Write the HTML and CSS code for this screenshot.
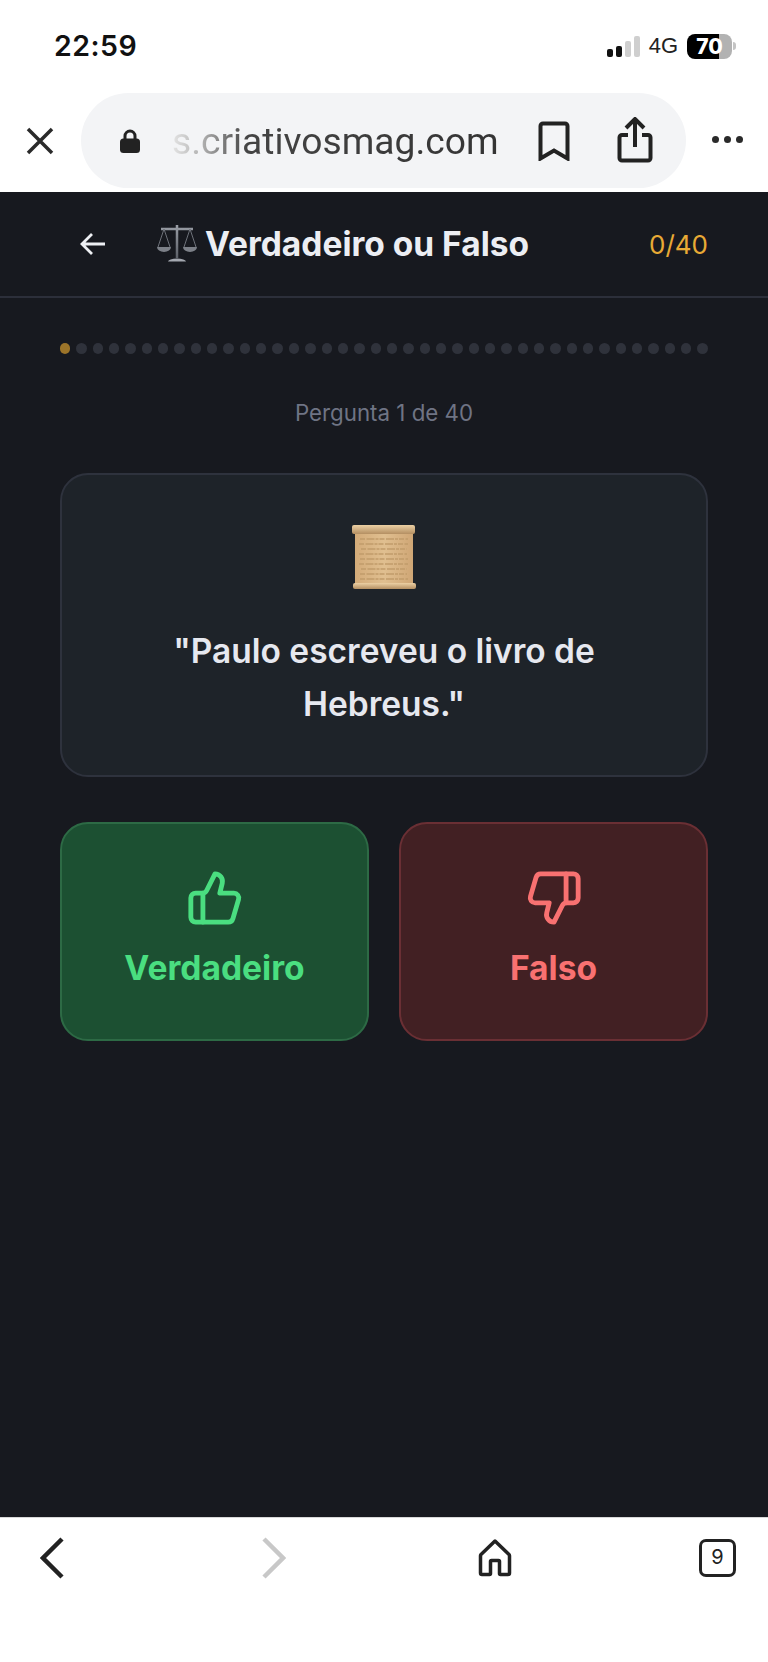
FILE: index.html
```html
<!DOCTYPE html>
<html lang="pt-BR">
<head>
  <meta charset="utf-8">
  <title>Verdadeiro ou Falso</title>
  <link rel="stylesheet" href="styles.css">
</head>

<body>
  <div class="status-bar">
    <span class="clock">22:59</span>
    <div class="status-right">
      <div class="signal">
        <i class="bar bar-1"></i><i class="bar bar-2"></i><i class="bar bar-3"></i><i class="bar bar-4"></i>
      </div>
      <span class="network">4G</span>
      <div class="battery">70</div>
      <i class="battery-nub"></i>
    </div>
  </div>

  <div class="browser-bar">
    <svg class="close-icon" viewBox="0 0 28 28"><path d="M2 2 26 26M26 2 2 26"/></svg>
    <div class="url-pill">
      <svg class="lock-icon" viewBox="0 0 20 24"><path class="lock-ring" d="M5 11V7a5 5 0 0 1 10 0v4"/><rect y="9.500" width="20" height="14.500" rx="3.500"/></svg>
      <span class="url-text">s.criativosmag.com</span>
      <svg class="bookmark-icon" viewBox="0 0 32 40"><path d="M2.500 37.500V5a2.500 2.500 0 0 1 2.500-2.500h22a2.500 2.500 0 0 1 2.500 2.500v32.500L16 29.500Z"/></svg>
      <svg class="share-icon" viewBox="0 0 36 46"><path d="M18 30V4M9 11l9-9 9 9"/><path d="M11 18H5a2.500 2.500 0 0 0-2.500 2.500V41A2.500 2.500 0 0 0 5 43.500h26a2.500 2.500 0 0 0 2.500-2.500V20.500A2.500 2.500 0 0 0 31 18h-6"/></svg>
    </div>
    <div class="more-dots"><i></i><i></i><i></i></div>
  </div>

  <main class="quiz">
    <header class="quiz-header">
      <svg class="back-arrow" viewBox="0 0 26 24"><path d="M25 12H2M12 2 2 12l10 10"/></svg>
      <h1 class="quiz-title">
        <svg class="scales-icon" viewBox="0 0 40 40">
          <defs>
            <linearGradient id="steel" x1="0" y1="0" x2="0" y2="1">
              <stop offset="0" stop-color="#9a9ea6"/>
              <stop offset="1" stop-color="#5c6068"/>
            </linearGradient>
          </defs>
          <path class="scale-post" d="M20 1v33M4 5h32"/>
          <path class="scale-string" d="M7 5 1 23M7 5l6 18M33 5l-6 18M33 5l6 18"/>
          <path class="scale-pan" d="M0 23h14a7 5 0 0 1-14 0ZM26 23h14a7 5 0 0 1-14 0Z"/>
          <path class="scale-base" d="M11 37.500a9 3 0 0 1 18 0Z"/>
        </svg>
        Verdadeiro ou Falso
      </h1>
      <span class="quiz-score">0/40</span>
    </header>

    <div class="quiz-body">
      <div class="progress-dots">
        <i class="dot current"></i><i class="dot"></i><i class="dot"></i><i class="dot"></i><i class="dot"></i>
        <i class="dot"></i><i class="dot"></i><i class="dot"></i><i class="dot"></i><i class="dot"></i>
        <i class="dot"></i><i class="dot"></i><i class="dot"></i><i class="dot"></i><i class="dot"></i>
        <i class="dot"></i><i class="dot"></i><i class="dot"></i><i class="dot"></i><i class="dot"></i>
        <i class="dot"></i><i class="dot"></i><i class="dot"></i><i class="dot"></i><i class="dot"></i>
        <i class="dot"></i><i class="dot"></i><i class="dot"></i><i class="dot"></i><i class="dot"></i>
        <i class="dot"></i><i class="dot"></i><i class="dot"></i><i class="dot"></i><i class="dot"></i>
        <i class="dot"></i><i class="dot"></i><i class="dot"></i><i class="dot"></i><i class="dot"></i>
      </div>

      <p class="question-count">Pergunta 1 de 40</p>

      <section class="question-card">
        <svg class="scroll-icon" viewBox="0 0 64 66">
          <defs>
            <linearGradient id="paper" x1="0" y1="0" x2="1" y2="0">
              <stop offset="0" stop-color="#d3ab79"/>
              <stop offset="0.5" stop-color="#e0bf90"/>
              <stop offset="1" stop-color="#cfa675"/>
            </linearGradient>
            <linearGradient id="roll" x1="0" y1="0" x2="0" y2="1">
              <stop offset="0" stop-color="#ecd0a4"/>
              <stop offset="1" stop-color="#b48f62"/>
            </linearGradient>
          </defs>
          <rect x="3" y="5" width="58" height="56" fill="url(#paper)"/>
          <path class="scroll-lines" d="M8 15h48M7 20h49M9 25h46M7 30h48M8 35h48M7 40h49M9 45h46M8 50h47M8 55h48"/>
          <rect x="0" y="1" width="63" height="9" rx="2" fill="url(#roll)"/>
          <rect x="1" y="59" width="63" height="6" rx="2" fill="url(#roll)"/>
        </svg>
        <p class="question-text">"Paulo escreveu o livro de Hebreus."</p>
      </section>

      <div class="answers">
        <button class="answer answer-true" type="button">
          <svg class="thumb" viewBox="0 0 24 24"><path d="M7 10v12"/><path d="M15 5.880 14 10h5.830a2 2 0 0 1 1.920 2.560l-2.330 8A2 2 0 0 1 17.500 22H4a2 2 0 0 1-2-2v-8a2 2 0 0 1 2-2h2.760a2 2 0 0 0 1.790-1.110L12 2a3.130 3.130 0 0 1 3 3.880Z"/></svg>
          Verdadeiro
        </button>
        <button class="answer answer-false" type="button">
          <svg class="thumb" viewBox="0 0 24 24"><path d="M17 14V2"/><path d="M9 18.120 10 14H4.170a2 2 0 0 1-1.920-2.560l2.330-8A2 2 0 0 1 6.500 2H20a2 2 0 0 1 2 2v8a2 2 0 0 1-2 2h-2.760a2 2 0 0 0-1.790 1.110L12 22a3.130 3.130 0 0 1-3-3.880Z"/></svg>
          Falso
        </button>
      </div>
    </div>
  </main>

  <nav class="bottom-nav">
    <svg class="chevron" viewBox="0 0 24 42"><path d="M22 2 3 21l19 19"/></svg>
    <svg class="chevron chevron-off" viewBox="0 0 24 42"><path d="M2 2l19 19L2 40"/></svg>
    <svg class="home-icon" viewBox="0 0 34 38"><path d="M17 2 3 15.500a2 2 0 0 0-.500 1.500V34a1.500 1.500 0 0 0 1.500 1.500h7.500a1 1 0 0 0 1-1V22.500a1 1 0 0 1 1-1h7a1 1 0 0 1 1 1V34.500a1 1 0 0 0 1 1H30a1.500 1.500 0 0 0 1.500-1.500V17a2 2 0 0 0-.500-1.500Z"/></svg>
    <div class="tab-count">9</div>
  </nav>
</body>
</html>
```

FILE: styles.css
```css
* {
  box-sizing: border-box;
}

html, body {
  height: 100%;
}

body {
  margin: 0;
  display: flex;
  flex-direction: column;
  height: 1662px;
  overflow: hidden;
  background: #fff;
  font-family: Inter, "Liberation Sans", sans-serif;
}

/* phone status bar */
.status-bar {
  height: 93px;
  flex: none;
  display: flex;
  justify-content: space-between;
  align-items: flex-start;
  padding: 29px 32px 0 54px;
}

.clock {
  font-size: 28.500px;
  line-height: 34px;
  font-weight: 600;
  color: #111;
  letter-spacing: 0.5px;
}

.status-right {
  display: flex;
  align-items: center;
  height: 34px;
}

.signal {
  display: flex;
  align-items: flex-end;
  gap: 3px;
  height: 22px;
  margin-right: 9px;
  padding-top: 1px;
}

.bar {
  width: 6px;
  border-radius: 2px;
  background: #111;
}

.bar-1 { height: 8px; }
.bar-2 { height: 11px; }
.bar-3 { height: 16px; background: #cfcfcf; }
.bar-4 { height: 21px; background: #cfcfcf; }

.network {
  font-size: 22px;
  font-family: "Liberation Sans", sans-serif;
  color: #222;
  margin-right: 9px;
}

.battery {
  width: 45px;
  height: 25px;
  border-radius: 8px;
  background: linear-gradient(90deg, #000 71%, #b2b2b2 71%);
  color: #fff;
  font-size: 21px;
  font-weight: 800;
  line-height: 25px;
  text-align: center;
}

.battery-nub {
  width: 3px;
  height: 8px;
  margin-left: 1px;
  border-radius: 0 3px 3px 0;
  background: #c4c4c4;
}

/* browser url bar */
.browser-bar {
  height: 99px;
  flex: none;
  display: flex;
  align-items: flex-start;
  padding-left: 26px;
}

.close-icon {
  width: 28px;
  height: 28px;
  margin-top: 34px;
  fill: none;
  stroke: #2a2a2a;
  stroke-width: 3.500;
}

.url-pill {
  width: 605px;
  height: 95px;
  margin-left: 27px;
  border-radius: 48px;
  background: #f3f4f6;
  display: flex;
  align-items: center;
  padding-left: 39px;
}

.lock-icon {
  width: 20px;
  height: 24px;
  fill: #222;
}

.lock-ring {
  fill: none;
  stroke: #222;
  stroke-width: 3;
}

.url-text {
  width: 337px;
  margin-left: 32px;
  font-family: Roboto, "Liberation Sans", sans-serif;
  font-size: 37.200px;
  white-space: nowrap;
  background: linear-gradient(90deg, #e4e4e4 0, #b0b0b0 30px, #444 75px, #333 100%);
  -webkit-background-clip: text;
  background-clip: text;
  color: transparent;
}

.bookmark-icon {
  width: 32px;
  height: 40px;
  margin-left: 29px;
  fill: none;
  stroke: #222;
  stroke-width: 4;
}

.share-icon {
  width: 36px;
  height: 46px;
  margin-left: 47px;
  margin-top: -2px;
  fill: none;
  stroke: #222;
  stroke-width: 4;
}

.more-dots {
  display: flex;
  gap: 5px;
  margin: 43px 0 0 26px;
}

.more-dots i {
  width: 7px;
  height: 7px;
  border-radius: 50%;
  background: #2a2a2a;
}

/* quiz */
.quiz {
  flex: 1;
  background: #17191f;
  display: flex;
  flex-direction: column;
}

.quiz-header {
  height: 106px;
  flex: none;
  display: flex;
  align-items: center;
  padding: 0 60px 0 80px;
  border-bottom: 2px solid #2c2f3a;
}

.back-arrow {
  width: 26px;
  height: 24px;
  fill: none;
  stroke: #eef0f4;
  stroke-width: 2.800;
}

.quiz-title {
  flex: 1;
  margin: 0 0 0 51px;
  display: flex;
  align-items: center;
  gap: 8px;
  font-size: 33.500px;
  font-weight: 700;
  color: #eceef3;
}

.scales-icon {
  width: 40px;
  height: 40px;
}

.scale-post {
  fill: none;
  stroke: url(#steel);
  stroke-width: 2.500;
}

.scale-string {
  fill: none;
  stroke: #6d7179;
  stroke-width: 1;
}

.scale-pan {
  fill: #7c8088;
}

.scale-base {
  fill: #a4a8b0;
}

.quiz-score {
  font-size: 26px;
  font-weight: 400;
  color: #e8aa35;
}

.quiz-body {
  padding: 0 60px;
}

.progress-dots {
  display: flex;
  gap: 6px;
  margin-top: 45px;
}

.dot {
  flex: 1;
  height: 11px;
  border-radius: 6px;
  background: #2f323b;
}

.dot.current {
  background: #9c7429;
}

.question-count {
  margin: 45px 0 0;
  text-align: center;
  font-size: 22.300px;
  line-height: 28px;
  color: #6f7484;
}

.question-card {
  height: 304px;
  margin-top: 46px;
  padding-top: 49px;
  border: 2px solid #2e323d;
  border-radius: 28px;
  background: #1e2329;
  display: flex;
  flex-direction: column;
  align-items: center;
}

.scroll-icon {
  width: 64px;
  height: 66px;
  flex: none;
}

.scroll-lines {
  fill: none;
  stroke: #c19c6b;
  stroke-width: 1.500;
  stroke-dasharray: 5 1.500 8 1 3 1;
}

.question-text {
  margin: 35px 60px 0;
  text-align: center;
  font-size: 33.500px;
  line-height: 53px;
  font-weight: 600;
  color: #e6e8ef;
}

.answers {
  display: grid;
  grid-template-columns: 1fr 1fr;
  gap: 30px;
  margin-top: 45px;
}

.answer {
  height: 219px;
  padding: 0 0 6px;
  border: 2px solid;
  border-radius: 28px;
  display: flex;
  flex-direction: column;
  align-items: center;
  justify-content: center;
  gap: 20px;
  font-family: inherit;
  font-size: 33.600px;
  font-weight: 700;
}

.answer-true {
  background: #1c5032;
  border-color: #2d6a45;
  color: #4ade80;
}

.answer-false {
  background: #422023;
  border-color: #6a2f34;
  color: #f87171;
}

.thumb {
  width: 58px;
  height: 58px;
  fill: none;
  stroke: currentColor;
  stroke-width: 2;
  stroke-linecap: round;
  stroke-linejoin: round;
}

/* browser toolbar */
.bottom-nav {
  height: 145px;
  flex: none;
  padding: 19px 32px 0 40px;
  display: flex;
  align-items: flex-start;
  border-top: 1px solid #d8d8d8;
  background: #fff;
}

.chevron {
  width: 24px;
  height: 42px;
  fill: none;
  stroke: #222;
  stroke-width: 4.500;
}

.chevron-off {
  margin-left: 198px;
  stroke: #c8c8c8;
}

.home-icon {
  width: 34px;
  height: 38px;
  margin: 2px 0 0 192px;
  fill: none;
  stroke: #222;
  stroke-width: 3.500;
  stroke-linejoin: round;
}

.tab-count {
  width: 37px;
  height: 38px;
  margin: 2px 0 0 187px;
  border: 3.500px solid #222;
  border-radius: 7px;
  font-size: 20px;
  line-height: 31px;
  text-align: center;
  color: #222;
}
```
